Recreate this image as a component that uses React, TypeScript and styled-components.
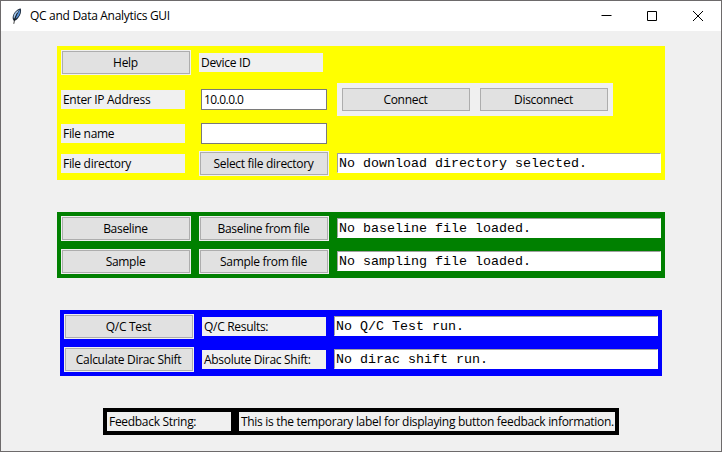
import React from 'react';
import styled, { createGlobalStyle } from 'styled-components';

const GlobalStyle = createGlobalStyle`
  * { box-sizing: border-box; }
  html, body { margin: 0; padding: 0; overflow: hidden; }
`;

const Window = styled.main`
  width: 722px;
  height: 452px;
  display: flex;
  flex-direction: column;
  background: #f0f0f0;
  border: 1px solid #6d6a6b;
  color: #000;
  font-family: 'Open Sans', 'Noto Sans', sans-serif;
  font-size: 12px;
  letter-spacing: -0.3px;
  line-height: 16px;
  white-space: nowrap;
`;

const TitleBar = styled.header`
  height: 30px;
  flex: none;
  display: flex;
  align-items: center;
  padding-left: 8px;
  background: #fff;
`;

const Title = styled.h1`
  flex: 1;
  margin: 0 0 0 5px;
  font-size: inherit;
  font-weight: 400;
`;

const CaptionButton = styled.button`
  width: 46px;
  height: 30px;
  padding: 0;
  border: 0;
  background: transparent;
  display: grid;
  place-items: center;
`;

const Content = styled.div`
  display: flex;
  flex-direction: column;
  padding: 15px 0 0 56px;
`;

const Panel = styled.section<{ $color: string; $columns: string; $rows: string; $top?: number; $left?: number }>`
  display: grid;
  width: max-content;
  grid-template-columns: ${(p) => p.$columns};
  grid-template-rows: ${(p) => p.$rows};
  align-items: center;
  margin: ${(p) => p.$top ?? 0}px 0 0 ${(p) => p.$left ?? 0}px;
  background: ${(p) => p.$color};
`;

const Button = styled.button`
  width: 130px;
  height: 25px;
  margin: 0 4px;
  padding: 1px;
  border: 0;
  background: #f0f0f0;
  color: inherit;
  font: inherit;
  letter-spacing: inherit;
`;

const ButtonFace = styled.span`
  display: flex;
  align-items: center;
  justify-content: center;
  height: 23px;
  padding-right: 1px;
  border: 1px solid #adadad;
  background: #e1e1e1;
`;

const Label = styled.div<{ $wide?: boolean }>`
  width: ${(p) => (p.$wide ? 376 : 124)}px;
  height: 19px;
  margin: 0 4px;
  padding: 2px 2px 0;
  background: #f0f0f0;
  line-height: 16px;
`;

const Entry = styled.input`
  width: 126px;
  height: 21px;
  margin: 0 6px;
  padding: 0 0 0 2px;
  border: 1px solid #7a7a7a;
  border-radius: 0;
  outline: 0;
  background: #fff;
  color: inherit;
  font: inherit;
  letter-spacing: -0.55px;
`;

const ButtonGroup = styled.div`
  display: flex;
  width: 276px;
  height: 33px;
  align-items: center;
  margin: 0 4px;
  background: #f0f0f0;
`;

const Output = styled.output`
  display: block;
  align-self: start;
  width: 324px;
  height: 20px;
  margin: 6px 4px 0;
  padding: 1px 0 0 1px;
  border: 1px solid #fff;
  border-top-color: #a0a0a0;
  border-left-color: #a0a0a0;
  background: #fff;
  font: 13.333px/18px 'Liberation Mono', monospace;
  letter-spacing: 0;
`;

const Feather = () => (
  <svg width="16" height="16" viewBox="0 0 16 16" aria-hidden="true">
    <path d="M5 13C2.9 10.8 3.4 7.3 6 4C7.6 1.9 9.8.4 11.8.4C12.6 3.3 11.7 6.8 9.4 9.8C8 11.5 6.7 12.7 5 13Z" fill="#1d2a3a" />
    <path d="M5.1 11C4 8.6 4.8 6.1 6.9 3.9L10.2 1.4L7.9 6.1Z" fill="#a3c6ea" />
    <path d="M6.2 11L8.3 6.3L11 1.5C11.6 4.3 10.6 6.8 8.8 9.1Z" fill="#568fd4" />
    <path d="M8.4 4.8C6.9 7.5 5.5 10.8 4.8 15.8" fill="none" stroke="#111" strokeWidth=".8" />
  </svg>
);

const CaptionIcon = ({ d }: { d: string }) => (
  <svg width="12" height="12" viewBox="0 0 12 12" fill="none" stroke="#000" aria-hidden="true">
    <path d={d} />
  </svg>
);

const PushButton = ({ children }: { children: string }) => (
  <Button>
    <ButtonFace>{children}</ButtonFace>
  </Button>
);

export default function App() {
  return (
    <>
      <GlobalStyle />
      <Window>
        <TitleBar>
          <Feather />
          <Title>QC and Data Analytics GUI</Title>
          <CaptionButton aria-label="Minimize">
            <CaptionIcon d="M1.5 5.5H11.5" />
          </CaptionButton>
          <CaptionButton aria-label="Maximize">
            <CaptionIcon d="M1.5 1.5H10.5V10.5H1.5Z" />
          </CaptionButton>
          <CaptionButton aria-label="Close">
            <CaptionIcon d="M1 1L11 11M11 1L1 11" />
          </CaptionButton>
        </TitleBar>
        <Content>
          <Panel $color="#ffff00" $columns="138px 138px 332px" $rows="33px 41px 27px 33px">
            <PushButton>Help</PushButton>
            <Label>Device ID</Label>
            <span />
            <Label>Enter IP Address</Label>
            <Entry aria-label="IP address" defaultValue="10.0.0.0" />
            <ButtonGroup>
              <PushButton>Connect</PushButton>
              <PushButton>Disconnect</PushButton>
            </ButtonGroup>
            <Label>File name</Label>
            <Entry aria-label="File name" />
            <span />
            <Label>File directory</Label>
            <PushButton>Select file directory</PushButton>
            <Output>No download directory selected.</Output>
          </Panel>
          <Panel $color="#008000" $columns="138px 138px 332px" $rows="33px 33px" $top={32}>
            <PushButton>Baseline</PushButton>
            <PushButton>Baseline from file</PushButton>
            <Output>No baseline file loaded.</Output>
            <PushButton>Sample</PushButton>
            <PushButton>Sample from file</PushButton>
            <Output>No sampling file loaded.</Output>
          </Panel>
          <Panel $color="#0000ff" $columns="138px 132px 332px" $rows="33px 33px" $top={32} $left={3}>
            <PushButton>Q/C Test</PushButton>
            <Label>Q/C Results:</Label>
            <Output>No Q/C Test run.</Output>
            <PushButton>Calculate Dirac Shift</PushButton>
            <Label>Absolute Dirac Shift:</Label>
            <Output>No dirac shift run.</Output>
          </Panel>
          <Panel $color="#000" $columns="132px 384px" $rows="27px" $top={32} $left={46}>
            <Label>Feedback String:</Label>
            <Label $wide>This is the temporary label for displaying button feedback information.</Label>
          </Panel>
        </Content>
      </Window>
    </>
  );
}
